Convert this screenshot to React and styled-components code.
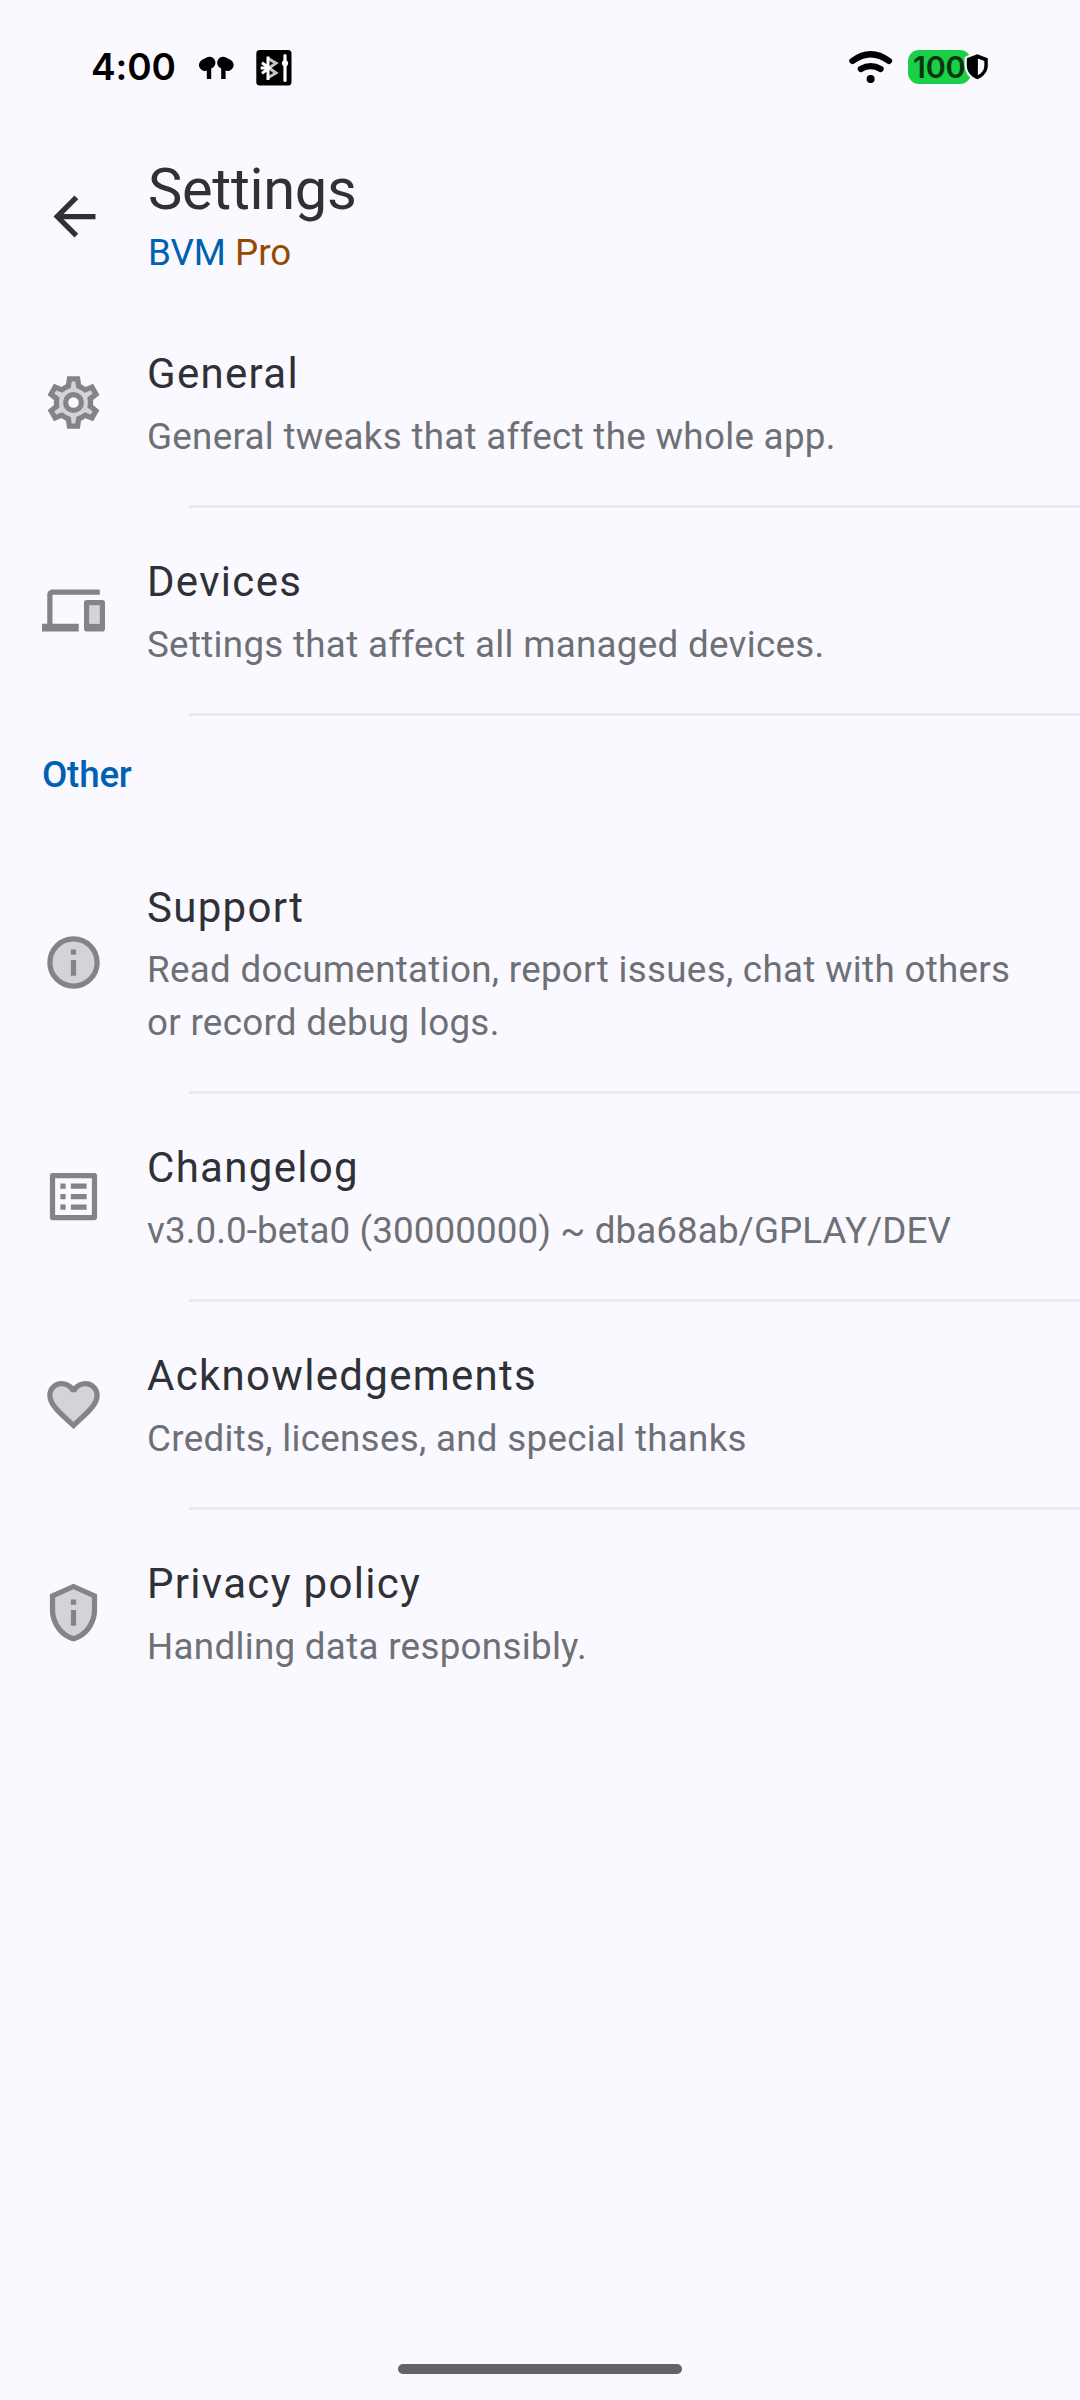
import React from "react";
import styled, { createGlobalStyle } from "styled-components";

const color = {
  background: "#faf9ff",
  title: "#2e3135",
  summary: "#6d7075",
  primary: "#0061b2",
  pro: "#964900",
  icon: "#838488",
  iconFill: "#d3d4da",
  divider: "#e9e9ef",
};

const GlobalStyle = createGlobalStyle`
  * { box-sizing: border-box; }
  body { margin: 0; background: ${color.background}; }
`;

const Screen = styled.div`
  display: flex;
  flex-direction: column;
  width: 1080px;
  height: 2400px;
  background: ${color.background};
  font-family: Roboto, "Liberation Sans", sans-serif;
  overflow: hidden;
`;

const StatusBar = styled.header`
  display: flex;
  align-items: flex-start;
  height: 133px;
  padding: 49px 90px 0 91px;
`;

const Clock = styled.div`
  width: 108px;
  height: 36px;
  font: 600 37px/35px Inter, sans-serif;
  letter-spacing: -0.1px;
  color: #000;
`;

const StatusGlyph = styled.svg`
  flex: none;
  display: block;
  margin-right: ${(p) => p.$gap || 0}px;
`;

const Spacer = styled.div`
  flex: 1;
`;

const Battery = styled.div`
  position: relative;
  width: 82px;
  height: 36px;
  padding-top: 1px;
`;

const BatteryLevel = styled.div`
  display: flex;
  align-items: center;
  width: 63px;
  height: 34px;
  padding-left: 5px;
  border-radius: 11px;
  background: #1bcf48;
  color: #06350f;
  font: 600 30.5px/34px Inter, sans-serif;
  letter-spacing: -0.2px;
`;

const BatteryShield = styled.svg`
  position: absolute;
  left: 55px;
  top: 2px;
`;

const AppBar = styled.div`
  display: flex;
  align-items: center;
  height: 167px;
  padding-left: 43px;
  gap: 42px;
`;

const Icon = styled.svg`
  display: block;
  flex: none;
  width: 63px;
  height: 63px;
`;

const Heading = styled.div`
  display: flex;
  flex-direction: column;
  gap: 1px;
  padding-bottom: 1px;
`;

const PageTitle = styled.h1`
  margin: 0;
  font-size: 57.75px;
  line-height: 73.5px;
  font-weight: 400;
  letter-spacing: -0.3px;
  color: ${color.title};
`;

const PageSubtitle = styled.div`
  font-size: 36.75px;
  line-height: 52.5px;
  color: ${color.primary};
`;

const Pro = styled.span`
  color: ${color.pro};
`;

const List = styled.main`
  display: flex;
  flex-direction: column;
  flex: 1;
`;

const Row = styled.div`
  display: flex;
  align-items: center;
  gap: 42px;
  min-height: ${(p) => (p.$tall ? 258 : 205)}px;
  padding: 42px 42px 41.25px;
`;

const RowText = styled.div`
  display: flex;
  flex-direction: column;
  gap: ${(p) => (p.$tall ? 5.5 : 6.25)}px;
  flex: 1;
  white-space: pre;
`;

const RowTitle = styled.div`
  font-size: 42px;
  line-height: 63px;
  letter-spacing: 1.31px;
  color: ${color.title};
`;

const RowSummary = styled.div`
  font-size: 36.75px;
  line-height: 52.5px;
  letter-spacing: ${(p) => (p.$dense ? 0.1 : 0.3)}px;
  color: ${color.summary};
`;

const Divider = styled.hr`
  flex: none;
  width: 891px;
  height: 3px;
  margin: 0 0 0 189px;
  border: 0;
  background: ${color.divider};
`;

const SectionTitle = styled.h2`
  height: 117px;
  margin: 0;
  padding: 33px 42px 0;
  font-size: 36.75px;
  line-height: 52.5px;
  font-weight: 500;
  letter-spacing: -0.2px;
  color: ${color.primary};
`;

const NavigationBar = styled.footer`
  display: flex;
  justify-content: center;
  height: 36px;
`;

const HomeHandle = styled.div`
  width: 284px;
  height: 10px;
  border-radius: 5px;
  background: #646466;
`;

const GearIcon = () => (
  <Icon viewBox="0 0 24 24">
    <path fill={color.icon} d="M19.44 12.99l-.01.02c.04-.33.08-.67.08-1.01 0-.34-.03-.66-.07-.99l.01.02 2.44-1.92-2.43-4.22-2.87 1.16.01.01c-.52-.4-1.09-.74-1.71-1h.01L14.44 2H9.57l-.44 3.07h.01c-.62.26-1.19.6-1.71 1l.01-.01-2.88-1.17-2.44 4.22 2.44 1.92.01-.02c-.04.33-.07.65-.07.99 0 .34.03.68.08 1.01l-.01-.02-2.1 1.65-.33.26 2.43 4.2 2.88-1.15-.02-.04c.53.41 1.1.75 1.73 1.01h-.03L9.58 22h4.85s.03-.18.06-.42l.38-2.65h-.01c.62-.26 1.2-.6 1.73-1.01l-.02.04 2.88 1.15 2.43-4.2s-.14-.12-.33-.26l-2.11-1.66z" />
    <path fill={color.iconFill} d="M19.28 8.6l-.7-1.21-1.27.51-1.06.43-.91-.7c-.39-.3-.8-.54-1.23-.71l-1.06-.43-.16-1.13L12.7 4h-1.4l-.19 1.35-.16 1.13-1.06.44c-.41.17-.82.41-1.25.73l-.9.68-1.05-.42-1.27-.52-.7 1.21 1.08.84.89.7-.14 1.13c-.03.3-.05.53-.05.73s.02.43.05.73l.14 1.13-.89.7-1.08.84.7 1.21 1.27-.51 1.06-.43.91.7c.39.3.8.54 1.23.71l1.06.43.16 1.13.19 1.36h1.39l.19-1.35.16-1.13 1.06-.43c.41-.17.82-.41 1.25-.73l.9-.68 1.04.42 1.27.51.7-1.21-1.08-.84-.89-.7.14-1.13c.04-.31.05-.52.05-.73 0-.21-.02-.43-.05-.73l-.14-1.13.89-.7 1.1-.84z" />
    <circle cx="12" cy="12" r="4" fill={color.icon} />
    <circle cx="12" cy="12" r="2" fill={color.background} />
  </Icon>
);

const DevicesIcon = () => (
  <Icon viewBox="0 0 24 24">
    <path fill={color.iconFill} d="M18 10h4v7h-4z" />
    <path fill={color.icon} d="M4 6h18V4H4c-1.1 0-2 .9-2 2v11H0v3h14v-3H4V6zm19 2h-6c-.55 0-1 .45-1 1v10c0 .55.45 1 1 1h6c.55 0 1-.45 1-1V9c0-.55-.45-1-1-1zm-1 9h-4v-7h4v7z" />
  </Icon>
);

const InfoIcon = () => (
  <Icon viewBox="0 0 24 24">
    <circle cx="12" cy="12" r="9" fill={color.iconFill} stroke={color.icon} strokeWidth="2" />
    <path fill={color.icon} d="M11 7h2v2h-2zM11 11h2v6h-2z" />
  </Icon>
);

const ListIcon = () => (
  <Icon viewBox="0 0 24 24">
    <path fill={color.icon} d="M11 7h6v2h-6zm0 4h6v2h-6zm0 4h6v2h-6zM7 7h2v2H7zm0 4h2v2H7zm0 4h2v2H7zM20.1 3H3.9c-.5 0-.9.4-.9.9v16.2c0 .4.4.9.9.9h16.2c.4 0 .9-.5.9-.9V3.9c0-.5-.5-.9-.9-.9zM19 19H5V5h14v14z" />
  </Icon>
);

const HeartIcon = () => (
  <Icon viewBox="0 0 24 24">
    <path fill={color.icon} d="M12 21.35l-1.45-1.32C5.4 15.36 2 12.28 2 8.5 2 5.42 4.42 3 7.5 3c1.74 0 3.41.81 4.5 2.09C13.09 3.81 14.76 3 16.5 3 19.58 3 22 5.42 22 8.5c0 3.78-3.4 6.86-8.55 11.54L12 21.35z" />
    <path fill={color.iconFill} d="M16.5 5c-1.54 0-3.04.99-3.56 2.36h-1.87C10.54 5.99 9.04 5 7.5 5 5.5 5 4 6.5 4 8.5c0 2.89 3.14 5.74 7.9 10.05l.1.1.1-.1C16.86 14.24 20 11.39 20 8.5c0-2-1.5-3.5-3.5-3.5z" />
  </Icon>
);

const PrivacyIcon = () => (
  <Icon viewBox="0 0 24 24">
    <path fill={color.icon} d="M12 1L3 5v6c0 5.55 3.84 10.74 9 12 5.16-1.26 9-6.45 9-12V5l-9-4z" />
    <path fill={color.iconFill} d="M5 6.3V11c0 4.52 2.98 8.69 7 9.93 4.02-1.24 7-5.41 7-9.93V6.3l-7-3.11L5 6.3z" />
    <path fill={color.icon} d="M11 7h2v2h-2zM11 11h2v6h-2z" />
  </Icon>
);

const BackIcon = () => (
  <Icon viewBox="0 0 24 24">
    <path fill={color.title} d="M20 11H7.83l5.59-5.59L12 4l-8 8 8 8 1.41-1.41L7.83 13H20v-2z" />
  </Icon>
);

const EarbudsIcon = () => (
  <StatusGlyph $gap={21} width="36" height="36" viewBox="0 0 36 36">
    <g stroke="#000" strokeLinecap="round">
      <path strokeWidth="12" d="M6 16L10.4 13.700M28.600 16L24.200 13.700" />
      <path strokeWidth="4.4" strokeLinecap="butt" d="M10 14V30M24.400 14V30" />
    </g>
  </StatusGlyph>
);

const BluetoothIcon = () => (
  <StatusGlyph width="36" height="37" viewBox="0 0 36 37">
    <rect x="0.3" y="1" width="35.2" height="35.5" rx="3.5" fill="#000" />
    <g fill="none" stroke="#fff" strokeWidth="3">
      <path stroke="#c4c4c4" d="M12 9.500L20 14.200L13 19L20 24L12 28.800" />
      <path d="M12 7.500V31M6 13.800L13 19L6 24.400M4.600 19H14" />
      <path strokeWidth="3.200" strokeLinecap="round" d="M29 6.500V31.500" />
    </g>
    <circle cx="29" cy="14.300" r="3.100" fill="#fff" />
  </StatusGlyph>
);

const WifiIcon = () => (
  <StatusGlyph $gap={15} width="44" height="36" viewBox="0 0 44 36">
    <g fill="none" stroke="#000" strokeWidth="6.2" strokeLinecap="round">
      <path d="M3.400 12Q21.700 -1.600 40 12" />
      <path d="M11.800 20Q21.700 14.400 31.600 20" />
    </g>
    <circle cx="21.600" cy="30" r="4" fill="#000" />
  </StatusGlyph>
);

const rows = {
  main: [
    { icon: GearIcon, title: "General", summary: "General tweaks that affect the whole app." },
    { icon: DevicesIcon, title: "Devices", summary: "Settings that affect all managed devices." },
  ],
  other: [
    {
      icon: InfoIcon,
      title: "Support",
      summary: "Read documentation, report issues, chat with others\nor record debug logs.",
      tall: true,
    },
    {
      icon: ListIcon,
      title: "Changelog",
      summary: "v3.0.0-beta0 (30000000) ~ dba68ab/GPLAY/DEV",
      dense: true,
    },
    { icon: HeartIcon, title: "Acknowledgements", summary: "Credits, licenses, and special thanks" },
    { icon: PrivacyIcon, title: "Privacy policy", summary: "Handling data responsibly." },
  ],
};

const SettingsRow = ({ icon: RowIcon, title, summary, divided, tall, dense }) => (
  <>
    <Row $tall={tall}>
      <RowIcon />
      <RowText $tall={tall}>
        <RowTitle>{title}</RowTitle>
        <RowSummary $dense={dense}>{summary}</RowSummary>
      </RowText>
    </Row>
    {divided && <Divider />}
  </>
);

export default function App() {
  return (
    <Screen>
      <GlobalStyle />
      <StatusBar>
        <Clock>4:00</Clock>
        <EarbudsIcon />
        <BluetoothIcon />
        <Spacer />
        <WifiIcon />
        <Battery>
          <BatteryLevel>100</BatteryLevel>
          <BatteryShield width="29" height="32" viewBox="0 0 29 32">
            <path
              d="M14.300 3.300L24.800 7.300V14.500C24.800 21 20.500 25.500 14.300 28.300C8.100 25.500 3.800 21 3.800 14.500V7.300Z"
              fill="#000"
              stroke={color.background}
              strokeWidth="4.500"
              strokeLinejoin="round"
              paintOrder="stroke"
            />
            <path d="M14.900 7.500L21.300 9.900V14.500C21.300 19 18.800 22 14.900 24.200Z" fill={color.background} />
          </BatteryShield>
        </Battery>
      </StatusBar>
      <AppBar>
        <BackIcon />
        <Heading>
          <PageTitle>Settings</PageTitle>
          <PageSubtitle>
            BVM <Pro>Pro</Pro>
          </PageSubtitle>
        </Heading>
      </AppBar>
      <List>
        {rows.main.map((row) => (
          <SettingsRow key={row.title} {...row} divided />
        ))}
        <SectionTitle>Other</SectionTitle>
        {rows.other.map((row, i) => (
          <SettingsRow key={row.title} {...row} divided={i < rows.other.length - 1} />
        ))}
      </List>
      <NavigationBar>
        <HomeHandle />
      </NavigationBar>
    </Screen>
  );
}
